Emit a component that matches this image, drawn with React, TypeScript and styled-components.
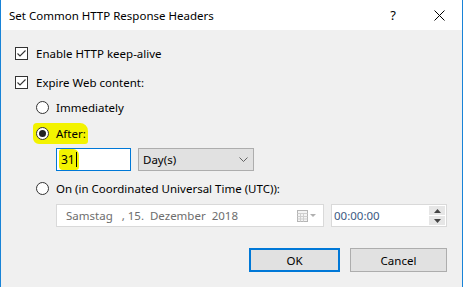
import styled, { createGlobalStyle } from "styled-components";

const GlobalStyle = createGlobalStyle`
  html, body {
    margin: 0;
    padding: 0;
    background: #f0f0f0;
  }
  body {
    font-family: "Noto Sans", "Liberation Sans", sans-serif;
    font-size: 11.5px;
    color: #000;
  }
`;

const Window = styled.div`
  width: 463px;
  height: 287px;
  box-sizing: border-box;
  border-left: 1px solid #1883d7;
  border-right: 1px solid #1883d7;
  background: #f0f0f0;
  display: flex;
  flex-direction: column;
  overflow: hidden;
`;

const TitleBar = styled.div`
  height: 30px;
  flex: none;
  background: #fff;
  display: flex;
  align-items: center;
  padding-left: 8px;
`;

const Title = styled.div`
  flex: 1;
  font-size: 11.5px;
`;

const TitleButton = styled.div`
  width: 46px;
  height: 30px;
  display: flex;
  align-items: center;
  justify-content: center;
  font-size: 13px;
`;

const Content = styled.div`
  display: flex;
  flex-direction: column;
  padding: 0 15px 0 14px;
`;

const Row = styled.div<{ $top: number; $indent?: number; $h?: number }>`
  display: flex;
  align-items: center;
  height: ${(p) => p.$h ?? 16}px;
  margin-top: ${(p) => p.$top}px;
  padding-left: ${(p) => p.$indent ?? 0}px;
  gap: 7px;
`;

const Box = styled.span`
  width: 13px;
  height: 13px;
  box-sizing: border-box;
  border: 1px solid #333;
  background: #fff;
  display: inline-flex;
  align-items: center;
  justify-content: center;
  margin-right: 1px;
  flex: none;
`;

const Radio = styled.span<{ $checked?: boolean }>`
  width: 13px;
  height: 13px;
  box-sizing: border-box;
  border: 1px solid #333;
  border-radius: 50%;
  background: #fff;
  display: inline-flex;
  align-items: center;
  justify-content: center;
  flex: none;
  &::after {
    content: "";
    display: ${(p) => (p.$checked ? "block" : "none")};
    width: 7px;
    height: 7px;
    border-radius: 50%;
    background: #222;
  }
`;

const Highlight = styled.span`
  display: inline-flex;
  align-items: center;
  gap: 7px;
  background: #f3f300;
  padding: 3px 2px 3px 3px;
  margin: -3px -2px -3px -3px;
  border-radius: 4px 8px 3px 6px;
`;

const TextField = styled.div<{ $w: number; $focus?: boolean }>`
  width: ${(p) => p.$w}px;
  height: 23px;
  box-sizing: border-box;
  border: 1px solid ${(p) => (p.$focus ? "#0078d7" : "#d9d9d9")};
  background: #fff;
  display: flex;
  align-items: center;
  padding-left: 2px;
`;

const Marked = styled.span`
  background: #f3f300;
  padding: 2px;
  border-radius: 3px 6px 3px 4px;
  display: inline-flex;
  align-items: center;
  font-size: 12px;
`;

const Caret = styled.span`
  width: 1px;
  height: 15px;
  background: #000;
  margin-left: 1px;
`;

const Select = styled.div`
  width: 116px;
  height: 23px;
  box-sizing: border-box;
  border: 1px solid #adadad;
  background: #e1e1e1;
  display: flex;
  align-items: center;
  justify-content: space-between;
  padding: 0 5px 0 4px;
`;

const DateField = styled(TextField)`
  color: #6d6d6d;
  padding-left: 9px;
  padding-right: 6px;
  justify-content: space-between;
  white-space: pre;
`;

const TimeField = styled(TextField)`
  color: #3c5a82;
  justify-content: space-between;
  padding-right: 1px;
`;

const Spinner = styled.div`
  display: flex;
  flex-direction: column;
  gap: 1px;
`;

const SpinButton = styled.div`
  width: 16px;
  height: 9px;
  background: #e6e6e6;
  display: flex;
  align-items: center;
  justify-content: center;
`;

const Buttons = styled.div`
  display: flex;
  justify-content: flex-end;
  gap: 10px;
  margin-top: 21px;
`;

const Button = styled.div<{ $w: number; $default?: boolean }>`
  width: ${(p) => p.$w}px;
  height: 24px;
  box-sizing: border-box;
  border: ${(p) => (p.$default ? "2px solid #0078d7" : "1px solid #adadad")};
  background: #e1e1e1;
  display: flex;
  align-items: center;
  justify-content: center;
`;

const Check = () => (
  <svg width="11" height="11" viewBox="0 0 11 11">
    <polyline points="1.5,5.5 4,8 9.5,2.5" fill="none" stroke="#333" strokeWidth="1.1" />
  </svg>
);

export default function App() {
  return (
    <>
      <GlobalStyle />
      <Window>
        <TitleBar>
          <Title>Set Common HTTP Response Headers</Title>
          <TitleButton>?</TitleButton>
          <TitleButton>
            <svg width="11" height="11" viewBox="0 0 11 11">
              <path d="M0.5 0.5 L10.5 10.5 M10.5 0.5 L0.5 10.5" stroke="#000" strokeWidth="1" />
            </svg>
          </TitleButton>
        </TitleBar>
        <Content>
          <Row $top={15}>
            <Box><Check /></Box>
            Enable HTTP keep-alive
          </Row>
          <Row $top={13}>
            <Box><Check /></Box>
            Expire Web content:
          </Row>
          <Row $top={9} $indent={21}>
            <Radio />
            Immediately
          </Row>
          <Row $top={10} $indent={21}>
            <Highlight>
              <Radio $checked />
              After:
            </Highlight>
          </Row>
          <Row $top={7} $indent={41} $h={23}>
            <TextField $w={75} $focus>
              <Marked>
                31<Caret />
              </Marked>
            </TextField>
            <Select>
              Day(s)
              <svg width="9" height="5" viewBox="0 0 9 5">
                <polyline points="0.5,0.5 4.5,4.5 8.5,0.5" fill="none" stroke="#555" strokeWidth="0.9" />
              </svg>
            </Select>
          </Row>
          <Row $top={9} $indent={21}>
            <Radio />
            On (in Coordinated Universal Time (UTC)):
          </Row>
          <Row $top={8} $indent={41} $h={23}>
            <DateField $w={268}>
              <span>Samstag   , 15.  Dezember  2018</span>
              <svg width="20" height="12" viewBox="0 0 20 12">
                <rect x="0.5" y="0.5" width="10" height="11" fill="#f4f4f4" stroke="#b5b5b5" />
                <path d="M0.5 3.5 H10.5 M0.5 6.5 H10.5 M0.5 9 H10.5 M3.5 3.5 V11.5 M6.5 3.5 V11.5" stroke="#cfcfcf" strokeWidth="1" />
                <path d="M13 4 L19 4 L16 7 Z" fill="#b0b0b0" />
              </svg>
            </DateField>
            <TimeField $w={116}>
              00:00:00
              <Spinner>
                <SpinButton>
                  <svg width="7" height="4" viewBox="0 0 7 4"><path d="M0 4 L3.5 0 L7 4 Z" fill="#444" /></svg>
                </SpinButton>
                <SpinButton>
                  <svg width="7" height="4" viewBox="0 0 7 4"><path d="M0 0 L3.5 4 L7 0 Z" fill="#444" /></svg>
                </SpinButton>
              </Spinner>
            </TimeField>
          </Row>
          <Buttons>
            <Button $w={91} $default>OK</Button>
            <Button $w={97}>Cancel</Button>
          </Buttons>
        </Content>
      </Window>
    </>
  );
}
